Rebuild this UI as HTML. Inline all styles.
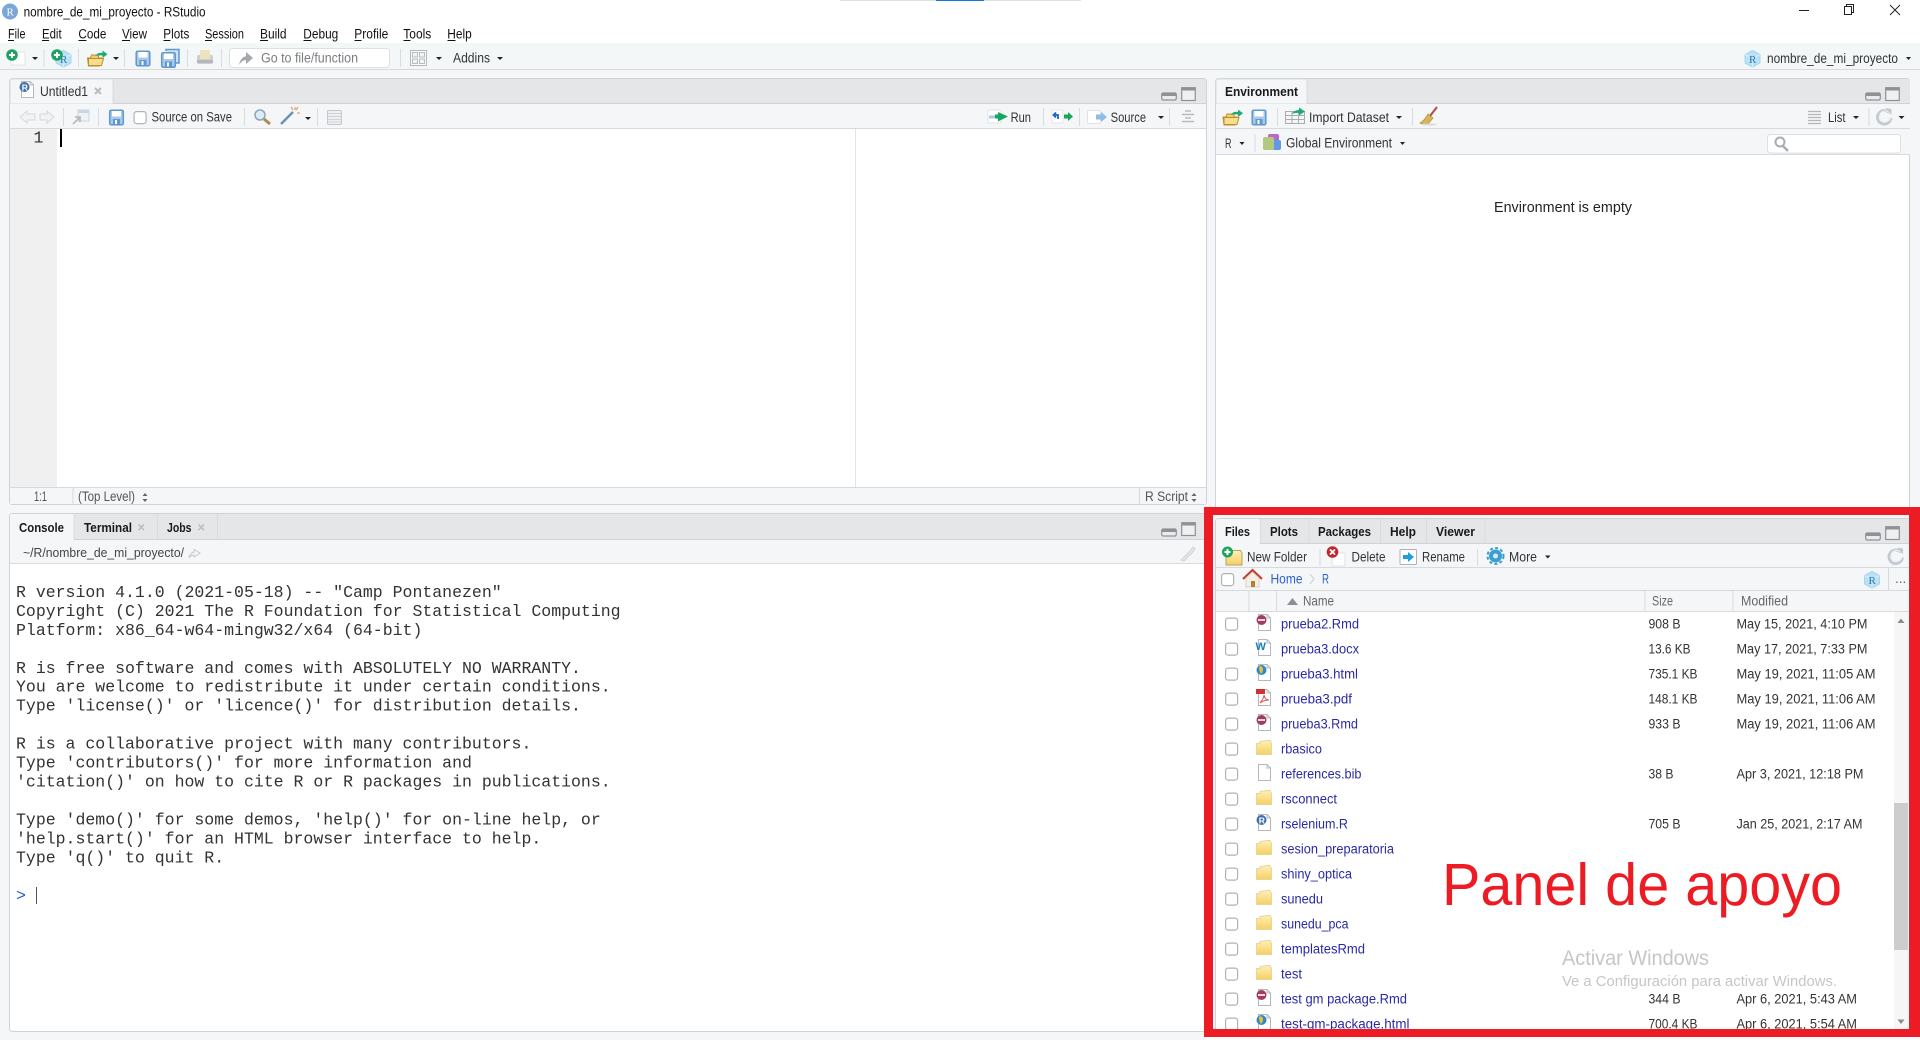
<!DOCTYPE html>
<html lang="es"><head><meta charset="utf-8"><title>nombre_de_mi_proyecto - RStudio</title>
<style>
html,body{margin:0;padding:0;width:1920px;height:1040px;overflow:hidden;background:#f4f6f8}
svg{display:block;filter:blur(.3px)}
text{font-family:"Liberation Sans",sans-serif;font-size:13.5px;fill:#333}
.m{font-size:13.5px;fill:#111}
.b{font-weight:bold;font-size:13px;fill:#1a1a1a}
.g{fill:#666}
.l{fill:#2a2aa8;font-size:13.5px}
.s{font-size:13.5px;fill:#333}
.c{font-family:"Liberation Mono",monospace;font-size:16.53px;fill:#333}
.sep{fill:#d8dcdf}
.car{fill:#222}
</style></head><body>
<svg xmlns="http://www.w3.org/2000/svg" width="1920" height="1040" viewBox="0 0 1920 1040">
<defs>
<linearGradient id="fg" x1="0" y1="0" x2="0" y2="1"><stop offset="0" stop-color="#fdf0b8"/><stop offset="1" stop-color="#f6cf62"/></linearGradient>
<g id="doc"><path d="M2.5 .5H11L14.5 4V16.5H2.5Z" fill="#fff" stroke="#b4b8bc"/><path d="M11 .5V4H14.5" fill="none" stroke="#b4b8bc"/></g>
<g id="rmd"><use href="#doc"/><circle cx="5.5" cy="6" r="5" fill="#a33a60"/><rect x="2" y="5" width="7" height="2" fill="#f0d6de"/></g>
<g id="word"><use href="#doc"/><text x="-.5" y="11" style="font-size:11px;font-weight:bold;fill:#1a7fc4">W</text></g>
<g id="html"><use href="#doc"/><circle cx="5.5" cy="6" r="5" fill="#2a88d0"/><path d="M3 2.5Q7 2 7 5T5 10Q3 7 3 2.5Z" fill="#f0c030"/></g>
<g id="pdf"><use href="#doc"/><rect x="0" y="0" width="9" height="5" fill="#d03030"/><path d="M4 14Q8 9 8 6Q9 11 13 11Q8 11 4 14Z" fill="none" stroke="#e05050"/></g>
<g id="rf"><use href="#doc"/><circle cx="5.5" cy="6" r="5" fill="#3f6fae"/><text x="2.7" y="9.500" style="font-size:8.5px;font-weight:bold;fill:#fff">R</text></g>
<g id="folder"><path d="M.5 14.5V3.5H4V1.5L11 .5H14L15.500 3.500V14.5Z" fill="url(#fg)" stroke="#e9d79a"/></g>
<g id="save"><rect x=".7" y=".7" width="13.600" height="14.600" rx="1.500" fill="#a9c9ea" stroke="#5f97cf" stroke-width="1.500"/><rect x="3" y="1.500" width="9" height="5.500" fill="#fff"/><rect x="4" y="9.500" width="7" height="5.500" fill="#5f97cf"/><rect x="6" y="10.500" width="2" height="4" fill="#fff"/></g>
<g id="rproj"><path d="M8.500 .5L16 4.500V13L8.500 17L1 13V4.500Z" fill="#b9e3f4" stroke="#a6d6ec"/><path d="M1 4.500L8.500 8.500L16 4.500M8.500 8.500V17" fill="none" stroke="#d5eff9"/><text x="5" y="13" style="font-size:11px;font-family:'Liberation Serif',serif;fill:#2a6fb0">R</text></g>
<g id="openf"><path d="M1 8H4L5 5H12V8H15L13 16H2Z" fill="#f3cf6c" stroke="#b98f2d"/><path d="M2 8.500H17L15 15.500H2Z" fill="#f8dd8c" stroke="#b98f2d"/><path d="M9 6Q11 2 16 3V.5L21 4.200L16 8V5.500Q12 5 9 6Z" fill="#1eaa70"/></g>
<g id="mm"><rect x=".7" y="3" width="14.600" height="7" rx="1.500" fill="#e9ebed" stroke="#8e9296" stroke-width="1.200"/><rect x="1" y="3" width="14" height="3" fill="#8e9296"/></g>
<g id="mx"><rect x=".7" y=".7" width="13.600" height="12.800" fill="#eef0f1" stroke="#8e9296" stroke-width="1.200"/><rect x="1" y="1" width="13" height="2.500" fill="#8e9296"/></g>
<g id="ref"><path d="M13.500 5.500A6.800 6.800 0 1 0 15 10.500" fill="none" stroke="#c3c9d0" stroke-width="2.800"/><path d="M13.500 5.500A5.500 5.500 0 1 0 14.500 10" fill="none" stroke="#eef1f4" stroke-width="1"/><path d="M9.500 0.500L15.500 1.500V7.500Z" fill="#c3c9d0"/></g>
<g id="cb"><rect x=".6" y=".6" width="12" height="12" rx="2.500" fill="#fff" stroke="#b2b2b2" stroke-width="1.200"/></g>
</defs>

<!-- Title bar -->
<rect width="1920" height="43" fill="#fff"/>
<rect x="840" y="0" width="241" height="1" fill="#dfe1e3"/><rect x="936" y="0" width="48" height="1" fill="#0f78d4"/>
<circle cx="10" cy="11.500" r="8" fill="#7ba7d8"/><text x="6.500" y="15.500" style="font-size:11px;font-family:'Liberation Serif',serif;fill:#fff">R</text>
<text x="23.600" y="16.500" class="m" textLength="182" lengthAdjust="spacingAndGlyphs">nombre_de_mi_proyecto - RStudio</text>
<rect x="1799" y="10" width="10" height="1" fill="#222"/>
<path d="M1844.500 6.500H1851.500V14.500H1844.500ZM1846.500 6V4.500H1853.500V12.500H1852" fill="none" stroke="#222"/>
<path d="M1890 5L1900 15M1900 5L1890 15" stroke="#222" stroke-width="1"/>

<!-- Menu -->
<g class="menu">
<text x="8" y="38.500" class="m" textLength="17.500" lengthAdjust="spacingAndGlyphs">File</text>
<text x="42" y="38.500" class="m" textLength="19.600" lengthAdjust="spacingAndGlyphs">Edit</text>
<text x="78.400" y="38.500" class="m" textLength="28" lengthAdjust="spacingAndGlyphs">Code</text>
<text x="122" y="38.500" class="m" textLength="25" lengthAdjust="spacingAndGlyphs">View</text>
<text x="163.300" y="38.500" class="m" textLength="26" lengthAdjust="spacingAndGlyphs">Plots</text>
<text x="205" y="38.500" class="m" textLength="39" lengthAdjust="spacingAndGlyphs">Session</text>
<text x="260" y="38.500" class="m" textLength="26.500" lengthAdjust="spacingAndGlyphs">Build</text>
<text x="303.300" y="38.500" class="m" textLength="35" lengthAdjust="spacingAndGlyphs">Debug</text>
<text x="354.300" y="38.500" class="m" textLength="34" lengthAdjust="spacingAndGlyphs">Profile</text>
<text x="403.300" y="38.500" class="m" textLength="28" lengthAdjust="spacingAndGlyphs">Tools</text>
<text x="447.300" y="38.500" class="m" textLength="24.500" lengthAdjust="spacingAndGlyphs">Help</text>
<path d="M8 40.500h6M42 40.500h7M78.500 40.500h8M122 40.500h8M163.500 40.500h7M205 40.500h7M260 40.500h8M303.500 40.500h8M354.500 40.500h7M403.500 40.500h7M447.500 40.500h8" stroke="#111" stroke-width="1"/>
</g>

<!-- Main toolbar -->
<rect y="43" width="1920" height="26" fill="#f4f7f8"/><rect y="69" width="1920" height="1" fill="#d6dadc"/>
<rect x="11" y="52" width="14" height="13" rx="1" fill="#fff" stroke="#e0e3e5"/>
<circle cx="12" cy="55" r="5.800" fill="#1da463"/><path d="M9 55H15M12 52V58" stroke="#fff" stroke-width="2"/>
<path d="M32 57h6l-3 3z" class="car"/><rect x="43.500" y="49" width="1" height="18" class="sep"/>
<use href="#rproj" x="55" y="50"/>
<circle cx="57" cy="55" r="5.800" fill="#1da463"/><path d="M54 55H60M57 52V58" stroke="#fff" stroke-width="2"/>
<rect x="78" y="49" width="1" height="18" class="sep"/>
<use href="#openf" x="86.500" y="50"/>
<path d="M113 57h6l-3 3z" class="car"/><rect x="124" y="49" width="1" height="18" class="sep"/>
<use href="#save" x="135.500" y="50.500"/>
<path d="M166 51V49.500H179V63H176" fill="#cfe2f4" stroke="#5f97cf" stroke-width="1.500"/><use href="#save" x="161" y="52"/>
<rect x="187" y="49" width="1" height="18" class="sep"/>
<rect x="197" y="55" width="16" height="9" rx="2" fill="#cdd0d3"/><rect x="200" y="50" width="10" height="9" fill="#efe3bd"/><rect x="197" y="60" width="16" height="3" fill="#b4b8bc"/>
<rect x="221" y="49" width="1" height="18" class="sep"/>
<rect x="229.500" y="48.500" width="160" height="19" rx="3" fill="#fff" stroke="#dde0e3"/>
<path d="M239 65Q240 58 246 56V52L253 58L246 64V60Q242 60 239 65Z" fill="#a5a9ad"/>
<text x="261" y="62.500" style="fill:#7a7d80" textLength="97" lengthAdjust="spacingAndGlyphs">Go to file/function</text>
<rect x="400" y="49" width="1" height="18" class="sep"/>
<rect x="410.500" y="50.500" width="16" height="15" fill="#fafbfb" stroke="#b4b8bc"/>
<rect x="412.500" y="52.500" width="5" height="4.500" fill="#f2f4f5" stroke="#b9bdc0"/><rect x="419.500" y="52.500" width="5" height="4.500" fill="#f2f4f5" stroke="#b9bdc0"/><rect x="412.500" y="59" width="5" height="4.500" fill="#f2f4f5" stroke="#b9bdc0"/><rect x="419.500" y="59" width="5" height="4.500" fill="#f2f4f5" stroke="#b9bdc0"/>
<path d="M436 57h6l-3 3z" class="car"/>
<text x="453" y="62.500" class="s" textLength="37" lengthAdjust="spacingAndGlyphs">Addins</text>
<path d="M497 57h6l-3 3z" class="car"/>
<use href="#rproj" x="1744" y="50"/>
<text x="1767" y="63" class="s" textLength="131" lengthAdjust="spacingAndGlyphs">nombre_de_mi_proyecto</text>
<path d="M1906 57h5l-2.500 3z" class="car"/>

<!-- Source pane -->
<rect x="9.500" y="78.500" width="1197" height="426" rx="3" fill="#fff" stroke="#d0d3d6"/>
<path d="M10 103V81Q10 79 12 79H1204Q1206 79 1206 81V103Z" fill="#e4e6e8"/>
<path d="M10 104V81Q10 79 12 79H111Q113 79 113 81V104Z" fill="#f4f6f8" stroke="#d9dcde"/>
<rect x="113" y="103" width="1093" height="1" fill="#d0d3d6"/>
<use href="#rf" x="19" y="81"/>
<text x="40" y="96" class="s" textLength="48" lengthAdjust="spacingAndGlyphs">Untitled1</text>
<path d="M95 88L101 94M101 88L95 94" stroke="#b8bcbf" stroke-width="2"/>
<rect x="10" y="104" width="1196" height="24" fill="#f4f6f8"/><rect x="10" y="128" width="1196" height="1" fill="#d6dadc"/>
<path d="M20 117L27 111V114H35V120H27V123Z" fill="#f0f2f3" stroke="#d6d9dc"/>
<path d="M54 117L47 111V114H40V120H47V123Z" fill="#f0f2f3" stroke="#d6d9dc"/>
<rect x="63" y="108" width="1" height="18" class="sep"/>
<rect x="78" y="110" width="11" height="11" fill="#eef2f5" stroke="#d3d7da"/><rect x="78" y="110" width="11" height="3" fill="#c8d6e6"/>
<path d="M73 124L79 118M75 117H80V122" fill="none" stroke="#aeb3b7" stroke-width="1.500"/>
<rect x="98" y="108" width="1" height="18" class="sep"/>
<use href="#save" x="109" y="109.500"/>
<use href="#cb" x="133.500" y="111"/>
<text x="151.500" y="121.500" class="s" textLength="80.500" lengthAdjust="spacingAndGlyphs">Source on Save</text>
<rect x="244" y="108" width="1" height="18" class="sep"/>
<circle cx="260" cy="115" r="5" fill="#dcecf8" stroke="#8fa6ba" stroke-width="1.500"/><path d="M264 119L270 124" stroke="#b08a48" stroke-width="3"/>
<path d="M281 124L293 112" stroke="#6f8fb5" stroke-width="2.500"/>
<path d="M295 107V110M297 113H300M291 107L293 110M298 107L296 110" stroke="#e28a4a" stroke-width="1"/>
<path d="M305 117h6l-3 3z" class="car"/>
<rect x="317" y="108" width="1" height="18" class="sep"/>
<rect x="327.500" y="110.500" width="14" height="14" rx="1" fill="#edf0f2" stroke="#c4c8cc"/>
<path d="M328 113.500h13M328 116.500h13M328 119.500h13M328 122h13" stroke="#cfd3d6"/>
<!-- right tools -->
<rect x="988" y="110" width="13" height="13" rx="1" fill="#fff" stroke="#e0e3e5"/>
<rect x="989" y="115.500" width="9" height="3" fill="#a9c8ea"/>
<path d="M998 114V112L1008 116.500L998 121.500V119Z" fill="#17a562"/><rect x="995" y="114.500" width="5" height="4" fill="#17a562"/>
<text x="1010.600" y="122" class="s" textLength="20.400" lengthAdjust="spacingAndGlyphs">Run</text>
<rect x="1043" y="108" width="1" height="18" class="sep"/>
<rect x="1052" y="110" width="11" height="13" rx="1" fill="#fff" stroke="#e3e6e8"/>
<path d="M1058 119V115H1055M1056 112.500L1053.500 115L1056 117.500" fill="none" stroke="#1e5fd0" stroke-width="1.800"/>
<path d="M1064 114.500H1068V112L1073 116.500L1068 121V118.500H1064Z" fill="#17a562"/>
<rect x="1079" y="108" width="1" height="18" class="sep"/>
<rect x="1087.500" y="110.500" width="13" height="13" rx="1" fill="#fff" stroke="#e0e3e5"/>
<path d="M1096 114.500H1101V112L1107 117L1101 122V119.500H1096Z" fill="#8fbdea"/>
<text x="1110.600" y="122" class="s" textLength="35.500" lengthAdjust="spacingAndGlyphs">Source</text>
<path d="M1158 116h6l-3 3z" class="car"/>
<rect x="1169" y="108" width="1" height="18" class="sep"/>
<path d="M1185 111h6M1182 114.500h12M1185 118h6M1182 121.500h12" stroke="#b8bcc0" stroke-width="1.500"/>
<use href="#mm" x="1161" y="90"/><use href="#mx" x="1181" y="87"/>
<!-- editor -->
<rect x="10" y="129" width="47" height="358" fill="#f0f0f0"/>
<rect x="855" y="129" width="1" height="358" fill="#e4e4e4"/>
<text x="33.500" y="142.500" class="c" style="fill:#333">1</text>
<rect x="60" y="129" width="2" height="18" fill="#000"/>
<rect x="10" y="487" width="1196" height="17" fill="#f4f6f8"/><rect x="10" y="487" width="1196" height="1" fill="#d6dadc"/>
<text x="34" y="501" class="s" style="fill:#555" textLength="13" lengthAdjust="spacingAndGlyphs">1:1</text>
<rect x="72.500" y="488" width="1" height="16" fill="#d6dadc"/>
<text x="78" y="501" class="s" style="fill:#555" textLength="57" lengthAdjust="spacingAndGlyphs">(Top Level)</text>
<path d="M142.500 496h5l-2.500-3zM142.500 499h5l-2.500 3z" fill="#666"/>
<rect x="1139" y="488" width="1" height="16" fill="#d6dadc"/>
<text x="1145" y="501" class="s" style="fill:#555" textLength="43" lengthAdjust="spacingAndGlyphs">R Script</text>
<path d="M1191.500 496h5l-2.500-3zM1191.500 499h5l-2.500 3z" fill="#666"/>

<!-- Environment pane -->
<rect x="1215.500" y="78.500" width="694" height="440" rx="3" fill="#fff" stroke="#d0d3d6"/>
<path d="M1216 103V81Q1216 79 1218 79H1908Q1910 79 1910 81V103Z" fill="#e4e6e8"/>
<path d="M1216 104V81Q1216 79 1218 79H1305Q1307 79 1307 81V104Z" fill="#f4f6f8" stroke="#d9dcde"/>
<rect x="1307" y="103" width="603" height="1" fill="#d0d3d6"/>
<text x="1225" y="96" class="b" textLength="73" lengthAdjust="spacingAndGlyphs">Environment</text>
<use href="#mm" x="1865" y="90"/><use href="#mx" x="1885" y="87"/>
<rect x="1216" y="104" width="694" height="24" fill="#f4f6f8"/><rect x="1216" y="128" width="694" height="1" fill="#d6dadc"/>
<rect x="1216" y="129" width="694" height="25" fill="#f4f6f8"/><rect x="1216" y="154" width="694" height="1" fill="#d6dadc"/>
<use href="#openf" x="1222" y="109"/>
<use href="#save" x="1251.500" y="109.500"/>
<rect x="1277" y="108" width="1" height="18" class="sep"/>
<path d="M1285.500 111.500H1304.500V123.500H1285.500ZM1285.500 115.500H1304.500M1285.500 119.500H1304.500M1292 111.500V123.500M1298.500 111.500V123.500" fill="#f5f6f7" stroke="#a9adb1"/>
<path d="M1292 114Q1294 110 1299 110V107.500L1305 111.500L1299 115.500V113Q1295 112.500 1292 114Z" fill="#1eaa70"/>
<text x="1309" y="122" class="s" textLength="80" lengthAdjust="spacingAndGlyphs">Import Dataset</text>
<path d="M1396 116h6l-3 3z" class="car"/>
<rect x="1412" y="108" width="1" height="18" class="sep"/>
<path d="M1437 107L1430 116" stroke="#b84a3c" stroke-width="2" fill="none"/>
<path d="M1428 114L1433 118L1428 124Q1424 125 1420 123Q1425 120 1428 114Z" fill="#d9b45a" stroke="#a88834" stroke-width=".7"/>
<ellipse cx="1429" cy="124.500" rx="8" ry="1" fill="#d9dbdd"/>
<path d="M1808 111.500h13M1808 114.500h13M1808 117.500h13M1808 120.500h13M1808 123.500h13" stroke="#b3b7bb" stroke-width="1.300"/>
<text x="1828" y="122" class="s" textLength="17.500" lengthAdjust="spacingAndGlyphs">List</text>
<path d="M1853 116h6l-3 3z" class="car"/>
<rect x="1868.500" y="108" width="1" height="18" class="sep"/>
<use href="#ref" x="1876" y="107.500"/>
<path d="M1898.500 116h6l-3 3z" class="car"/>
<text x="1225" y="148" class="s" style="fill:#333" textLength="6.500" lengthAdjust="spacingAndGlyphs">R</text>
<path d="M1239.500 142h5l-2.500 3z" class="car"/>
<rect x="1254.500" y="134" width="1" height="18" class="sep"/>
<rect x="1268" y="134" width="11" height="13" rx="2" fill="#b86bc4"/><rect x="1270" y="140" width="11" height="10" rx="2" fill="#5e9be0"/><rect x="1263" y="137" width="11" height="13" rx="2" fill="#b4c97f"/>
<text x="1286" y="147.500" class="s" textLength="106" lengthAdjust="spacingAndGlyphs">Global Environment</text>
<path d="M1400 142h5l-2.500 3z" class="car"/>
<rect x="1767.500" y="134.500" width="133" height="18.500" rx="3" fill="#fff" stroke="#dde0e3"/>
<circle cx="1780" cy="142" r="4.500" fill="none" stroke="#a9adb1" stroke-width="2"/><path d="M1783 146L1788 151" stroke="#a9adb1" stroke-width="2.500"/>
<text x="1494" y="212" style="font-size:15px;fill:#222" textLength="138" lengthAdjust="spacingAndGlyphs">Environment is empty</text>

<!-- Console pane -->
<rect x="9.500" y="513.500" width="1197" height="518" rx="3" fill="#fff" stroke="#d0d3d6"/>
<path d="M10 539V516Q10 514 12 514H1204Q1206 514 1206 516V539Z" fill="#e4e6e8"/>
<path d="M10 540V516Q10 514 12 514H73.500V540Z" fill="#f4f6f8"/>
<rect x="73.500" y="514" width="1" height="26" fill="#d9dcde"/><rect x="157" y="514" width="1" height="26" fill="#d9dcde"/><rect x="217" y="514" width="1" height="26" fill="#d9dcde"/>
<rect x="74" y="539" width="1132" height="1" fill="#d0d3d6"/>
<text x="19" y="532" class="b" textLength="45" lengthAdjust="spacingAndGlyphs">Console</text>
<text x="84" y="532" class="b" textLength="48" lengthAdjust="spacingAndGlyphs">Terminal</text>
<path d="M138.500 524.500L144 530M144 524.500L138.500 530M198.500 524.500L204 530M204 524.500L198.500 530" stroke="#bcc0c3" stroke-width="1.600"/>
<text x="167" y="532" class="b" textLength="24.500" lengthAdjust="spacingAndGlyphs">Jobs</text>
<use href="#mm" x="1161" y="526"/><use href="#mx" x="1181" y="522"/>
<rect x="10" y="540" width="1196" height="23" fill="#f4f6f8"/><rect x="10" y="563" width="1196" height="1" fill="#d6dadc"/>
<text x="23" y="557" style="font-size:12.500px;fill:#444" textLength="161" lengthAdjust="spacingAndGlyphs">~/R/nombre_de_mi_proyecto/</text>
<path d="M189 558Q190 553 194 552V549.500L200 553L194 557V555Q191 555 189 558Z" fill="none" stroke="#c5c9cc"/>
<path d="M1181 560L1190 551L1193 547L1195 549L1192 553L1184 561Z" fill="#e3e6e8" stroke="#d3d6d9"/>
<g class="con">
<text x="16" y="597" class="c">R version 4.1.0 (2021-05-18) -- "Camp Pontanezen"</text>
<text x="16" y="616" class="c">Copyright (C) 2021 The R Foundation for Statistical Computing</text>
<text x="16" y="635" class="c">Platform: x86_64-w64-mingw32/x64 (64-bit)</text>
<text x="16" y="673" class="c">R is free software and comes with ABSOLUTELY NO WARRANTY.</text>
<text x="16" y="691.500" class="c">You are welcome to redistribute it under certain conditions.</text>
<text x="16" y="710.500" class="c">Type 'license()' or 'licence()' for distribution details.</text>
<text x="16" y="748.500" class="c">R is a collaborative project with many contributors.</text>
<text x="16" y="767.500" class="c">Type 'contributors()' for more information and</text>
<text x="16" y="786.500" class="c">'citation()' on how to cite R or R packages in publications.</text>
<text x="16" y="824.500" class="c">Type 'demo()' for some demos, 'help()' for on-line help, or</text>
<text x="16" y="843.500" class="c">'help.start()' for an HTML browser interface to help.</text>
<text x="16" y="862.500" class="c">Type 'q()' to quit R.</text>
<text x="16" y="900.500" class="c" style="fill:#2a5bd0">&gt;</text>
<rect x="36" y="887" width="1" height="17" fill="#555"/>
</g>

<!-- Files pane -->
<rect x="1213" y="515" width="707" height="525" fill="#f4f6f8"/>
<rect x="1215.500" y="518.500" width="694" height="518" rx="3" fill="#fff" stroke="#d0d3d6"/>
<path d="M1216 543V521Q1216 519 1218 519H1908Q1910 519 1910 521V543Z" fill="#e4e6e8"/>
<path d="M1216 544V521Q1216 519 1218 519H1258Q1260 519 1260 521V544Z" fill="#f4f6f8"/>
<path d="M1260.500 519V543M1309 519V543M1380.500 519V543M1426.500 519V543M1485 519V543" stroke="#d9dcde"/>
<rect x="1260" y="543" width="650" height="1" fill="#d0d3d6"/>
<text x="1225" y="536" class="b" textLength="25" lengthAdjust="spacingAndGlyphs">Files</text>
<text x="1270" y="536" class="b" textLength="28" lengthAdjust="spacingAndGlyphs">Plots</text>
<text x="1318" y="536" class="b" textLength="53" lengthAdjust="spacingAndGlyphs">Packages</text>
<text x="1390" y="536" class="b" textLength="26" lengthAdjust="spacingAndGlyphs">Help</text>
<text x="1436" y="536" class="b" textLength="39" lengthAdjust="spacingAndGlyphs">Viewer</text>
<use href="#mm" x="1865" y="530"/><use href="#mx" x="1885" y="526"/>
<rect x="1216" y="544" width="694" height="23" fill="#f4f6f8"/><rect x="1216" y="567" width="694" height="1" fill="#d6dadc"/>
<path d="M1226 553H1229L1230.500 550.500H1240.500L1242 553V565H1226Z" fill="url(#fg)" stroke="#b9a45c"/>
<circle cx="1227.500" cy="552" r="5.500" fill="#1da463"/><path d="M1224.500 552H1230.500M1227.500 549V555" stroke="#fff" stroke-width="2"/>
<text x="1247" y="561.500" class="s" textLength="60" lengthAdjust="spacingAndGlyphs">New Folder</text>
<rect x="1319.500" y="549" width="1" height="17" class="sep"/>
<rect x="1332" y="553" width="13" height="13" rx="1" fill="#fff" stroke="#dfe2e4"/>
<circle cx="1332.500" cy="552" r="5.800" fill="#c0262c"/><path d="M1330 549.500L1335 554.500M1335 549.500L1330 554.500" stroke="#fff" stroke-width="1.800"/>
<text x="1351.500" y="561.500" class="s" textLength="34" lengthAdjust="spacingAndGlyphs">Delete</text>
<rect x="1400" y="549.500" width="16.500" height="15" rx="1" fill="#fff" stroke="#aeb2b6"/>
<path d="M1403 555H1408V552L1414 557L1408 562V559H1403Z" fill="#1b9fe0"/>
<text x="1422" y="561.500" class="s" textLength="43" lengthAdjust="spacingAndGlyphs">Rename</text>
<rect x="1477" y="549" width="1" height="17" class="sep"/>
<circle cx="1495.500" cy="556" r="6.500" fill="#3a9fd0"/><circle cx="1495.500" cy="556" r="8" fill="none" stroke="#3a9fd0" stroke-width="2" stroke-dasharray="3 2.300"/><circle cx="1495.500" cy="556" r="2.500" fill="#d6ecf6"/>
<text x="1509" y="561.500" class="s" textLength="28" lengthAdjust="spacingAndGlyphs">More</text>
<path d="M1545 555.500h5.500l-2.750 3z" class="car"/>
<use href="#ref" x="1887.500" y="547"/>
<rect x="1216" y="568" width="694" height="22" fill="#f4f6f8"/><rect x="1216" y="590" width="694" height="1" fill="#d6dadc"/>
<use href="#cb" x="1221" y="573"/>
<path d="M1243 579L1252.500 570L1262 579" fill="none" stroke="#c0392b" stroke-width="2"/>
<path d="M1246 578L1252.500 572L1259 578V587H1246Z" fill="#f3efe6" stroke="#d9d3c6"/><rect x="1251" y="581" width="4" height="6" fill="#b0813d"/>
<text x="1270.500" y="583.500" class="s" style="fill:#2f5fce" textLength="32" lengthAdjust="spacingAndGlyphs">Home</text>
<path d="M1310 574L1314 579L1310 584" fill="none" stroke="#c7cbce"/>
<text x="1322" y="583.500" class="s" style="fill:#2f5fce" textLength="7" lengthAdjust="spacingAndGlyphs">R</text>
<use href="#rproj" x="1863.500" y="571"/>
<rect x="1888" y="568" width="1" height="22" fill="#d6dadc"/>
<text x="1895" y="583" class="s" style="fill:#666">...</text>
<rect x="1216" y="591" width="694" height="20" fill="#f4f6f8"/><rect x="1216" y="611" width="694" height="1" fill="#d6dadc"/>
<path d="M1249 591V611M1276.500 591V611M1645 591V611M1733 591V611" stroke="#d9dcde"/>
<path d="M1287 605L1292.500 598L1298 605Z" fill="#8a9097"/>
<text x="1303" y="605.500" class="g" textLength="31" lengthAdjust="spacingAndGlyphs">Name</text>
<text x="1652" y="605.500" class="g" textLength="21" lengthAdjust="spacingAndGlyphs">Size</text>
<text x="1741" y="605.500" class="g" textLength="47" lengthAdjust="spacingAndGlyphs">Modified</text>
<!-- rows -->
<rect x="1894" y="612" width="15" height="420" fill="#f6f6f6"/>
<rect x="1894" y="803" width="14" height="147" fill="#cdcdcd"/>
<path d="M1897.500 623L1901 618.500L1904.500 623Z M1897.500 1019.500L1901 1024L1904.500 1019.500Z" fill="#8a8a8a"/>

<use href="#cb" x="1225" y="617.500"/><use href="#rmd" x="1256" y="614"/>
<text x="1281" y="628.500" class="l" textLength="78" lengthAdjust="spacingAndGlyphs">prueba2.Rmd</text>
<text x="1648.500" y="628.500" class="s" textLength="32" lengthAdjust="spacingAndGlyphs">908 B</text>
<text x="1736.500" y="628.500" class="s" textLength="131" lengthAdjust="spacingAndGlyphs">May 15, 2021, 4:10 PM</text>

<use href="#cb" x="1225" y="642.500"/><use href="#word" x="1256" y="639"/>
<text x="1281" y="653.500" class="l" textLength="78" lengthAdjust="spacingAndGlyphs">prueba3.docx</text>
<text x="1648.500" y="653.500" class="s" textLength="42" lengthAdjust="spacingAndGlyphs">13.6 KB</text>
<text x="1736.500" y="653.500" class="s" textLength="131" lengthAdjust="spacingAndGlyphs">May 17, 2021, 7:33 PM</text>

<use href="#cb" x="1225" y="667.500"/><use href="#html" x="1256" y="664"/>
<text x="1281" y="678.500" class="l" textLength="77" lengthAdjust="spacingAndGlyphs">prueba3.html</text>
<text x="1648.500" y="678.500" class="s" textLength="49" lengthAdjust="spacingAndGlyphs">735.1 KB</text>
<text x="1736.500" y="678.500" class="s" textLength="139" lengthAdjust="spacingAndGlyphs">May 19, 2021, 11:05 AM</text>

<use href="#cb" x="1225" y="692.500"/><use href="#pdf" x="1256" y="689"/>
<text x="1281" y="703.500" class="l" textLength="71" lengthAdjust="spacingAndGlyphs">prueba3.pdf</text>
<text x="1648.500" y="703.500" class="s" textLength="49" lengthAdjust="spacingAndGlyphs">148.1 KB</text>
<text x="1736.500" y="703.500" class="s" textLength="139" lengthAdjust="spacingAndGlyphs">May 19, 2021, 11:06 AM</text>

<use href="#cb" x="1225" y="717.500"/><use href="#rmd" x="1256" y="714"/>
<text x="1281" y="728.500" class="l" textLength="77" lengthAdjust="spacingAndGlyphs">prueba3.Rmd</text>
<text x="1648.500" y="728.500" class="s" textLength="32" lengthAdjust="spacingAndGlyphs">933 B</text>
<text x="1736.500" y="728.500" class="s" textLength="139" lengthAdjust="spacingAndGlyphs">May 19, 2021, 11:06 AM</text>

<use href="#cb" x="1225" y="742.500"/><use href="#folder" x="1256" y="740"/>
<text x="1281" y="753.500" class="l" textLength="41" lengthAdjust="spacingAndGlyphs">rbasico</text>

<use href="#cb" x="1225" y="767.500"/><use href="#doc" x="1256" y="764"/>
<text x="1281" y="778.500" class="l" textLength="80.500" lengthAdjust="spacingAndGlyphs">references.bib</text>
<text x="1648.500" y="778.500" class="s" textLength="25" lengthAdjust="spacingAndGlyphs">38 B</text>
<text x="1736.500" y="778.500" class="s" textLength="127" lengthAdjust="spacingAndGlyphs">Apr 3, 2021, 12:18 PM</text>

<use href="#cb" x="1225" y="792.500"/><use href="#folder" x="1256" y="790"/>
<text x="1281" y="803.500" class="l" textLength="56" lengthAdjust="spacingAndGlyphs">rsconnect</text>

<use href="#cb" x="1225" y="817.500"/><use href="#rf" x="1256" y="814"/>
<text x="1281" y="828.500" class="l" textLength="67" lengthAdjust="spacingAndGlyphs">rselenium.R</text>
<text x="1648.500" y="828.500" class="s" textLength="32" lengthAdjust="spacingAndGlyphs">705 B</text>
<text x="1736.500" y="828.500" class="s" textLength="126" lengthAdjust="spacingAndGlyphs">Jan 25, 2021, 2:17 AM</text>

<use href="#cb" x="1225" y="842.500"/><use href="#folder" x="1256" y="840"/>
<text x="1281" y="853.500" class="l" textLength="113" lengthAdjust="spacingAndGlyphs">sesion_preparatoria</text>

<use href="#cb" x="1225" y="867.500"/><use href="#folder" x="1256" y="865"/>
<text x="1281" y="878.500" class="l" textLength="71" lengthAdjust="spacingAndGlyphs">shiny_optica</text>

<use href="#cb" x="1225" y="892.500"/><use href="#folder" x="1256" y="890"/>
<text x="1281" y="903.500" class="l" textLength="42" lengthAdjust="spacingAndGlyphs">sunedu</text>

<use href="#cb" x="1225" y="917.500"/><use href="#folder" x="1256" y="915"/>
<text x="1281" y="928.500" class="l" textLength="67.500" lengthAdjust="spacingAndGlyphs">sunedu_pca</text>

<use href="#cb" x="1225" y="942.500"/><use href="#folder" x="1256" y="940"/>
<text x="1281" y="953.500" class="l" textLength="84" lengthAdjust="spacingAndGlyphs">templatesRmd</text>

<use href="#cb" x="1225" y="967.500"/><use href="#folder" x="1256" y="965"/>
<text x="1281" y="978.500" class="l" textLength="21" lengthAdjust="spacingAndGlyphs">test</text>

<use href="#cb" x="1225" y="992.500"/><use href="#rmd" x="1256" y="989"/>
<text x="1281" y="1003.500" class="l" textLength="126" lengthAdjust="spacingAndGlyphs">test gm package.Rmd</text>
<text x="1648.500" y="1003.500" class="s" textLength="32" lengthAdjust="spacingAndGlyphs">344 B</text>
<text x="1736.500" y="1003.500" class="s" textLength="120.500" lengthAdjust="spacingAndGlyphs">Apr 6, 2021, 5:43 AM</text>

<use href="#cb" x="1225" y="1017.500"/><use href="#html" x="1256" y="1014"/>
<text x="1281" y="1028.500" class="l" textLength="128.500" lengthAdjust="spacingAndGlyphs">test-gm-package.html</text>
<text x="1648.500" y="1028.500" class="s" textLength="49" lengthAdjust="spacingAndGlyphs">700.4 KB</text>
<text x="1736.500" y="1028.500" class="s" textLength="120.500" lengthAdjust="spacingAndGlyphs">Apr 6, 2021, 5:54 AM</text>

<!-- Windows watermark + annotation -->
<text x="1562" y="965" style="font-size:21px;fill:#c6c6c6" textLength="147" lengthAdjust="spacingAndGlyphs">Activar Windows</text>
<text x="1562" y="986" style="font-size:15px;fill:#c6c6c6" textLength="275" lengthAdjust="spacingAndGlyphs">Ve a Configuración para activar Windows.</text>
<text x="1442" y="905" style="font-size:59px;fill:#ed1c24" textLength="400" lengthAdjust="spacingAndGlyphs">Panel de apoyo</text>

<!-- Red frame -->
<rect x="1204" y="507" width="716" height="8" fill="#ed1c24"/>
<rect x="1204" y="507" width="9" height="530" fill="#ed1c24"/>
<rect x="1909" y="507" width="11" height="530" fill="#ed1c24"/>
<rect x="1204" y="1029" width="716" height="8" fill="#ed1c24"/>
<rect x="1204" y="1037" width="716" height="3" fill="#fbfbfb"/>
</svg>
</body></html>
